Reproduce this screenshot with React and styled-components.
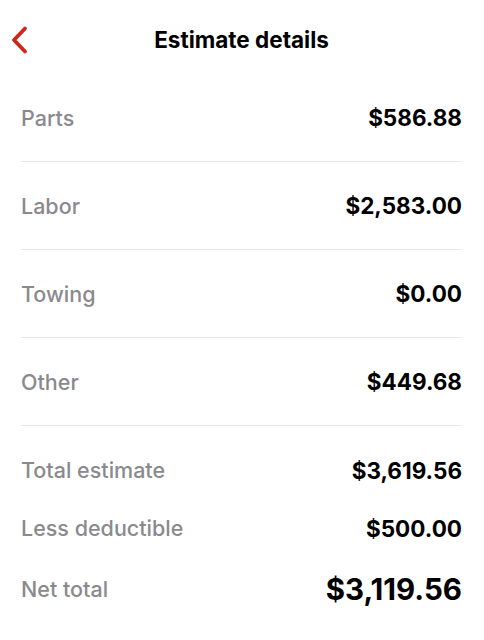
import React from 'react';
import styled, { createGlobalStyle } from 'styled-components';

const GlobalStyle = createGlobalStyle`
  html, body {
    margin: 0;
    padding: 0;
    background: #ffffff;
  }
  body {
    font-family: Inter, "Noto Sans", Arial, sans-serif;
    -webkit-font-smoothing: antialiased;
  }
`;

const lineItems = [
  { label: 'Parts', amount: '$586.88' },
  { label: 'Labor', amount: '$2,583.00' },
  { label: 'Towing', amount: '$0.00' },
  { label: 'Other', amount: '$449.68' },
];

const summary = [
  { label: 'Total estimate', amount: '$3,619.56' },
  { label: 'Less deductible', amount: '$500.00' },
  { label: 'Net total', amount: '$3,119.56', big: true },
];

const App = () => {
  return (
    <>
      <GlobalStyle />
      <Screen>
        <Header>
          <BackButton aria-label="Back">
            <svg width="20" height="30" viewBox="0 0 20 30">
              <polyline
                points="15,3.5 4,15 15,26.5"
                fill="none"
                stroke="#cf261c"
                strokeWidth="3.8"
                strokeLinecap="round"
                strokeLinejoin="round"
              />
            </svg>
          </BackButton>
          <Title>Estimate details</Title>
        </Header>

        <List>
          {lineItems.map((item) => (
            <ItemRow key={item.label}>
              <Label>{item.label}</Label>
              <Amount>{item.amount}</Amount>
            </ItemRow>
          ))}
        </List>

        <Summary>
          {summary.map((item) => (
            <SummaryRow key={item.label} big={item.big}>
              <Label>{item.label}</Label>
              <Amount big={item.big}>{item.amount}</Amount>
            </SummaryRow>
          ))}
        </Summary>
      </Screen>
    </>
  );
};

export default App;

const Screen = styled.div`
  width: 484px;
  min-height: 640px;
  padding: 0 22px 0 21px;
  box-sizing: border-box;
  background: #ffffff;
`;

const Header = styled.div`
  position: relative;
  display: flex;
  justify-content: center;
  align-items: center;
  padding: 27px 0 21px;
  height: 26px;
`;

const BackButton = styled.button`
  position: absolute;
  left: -11px;
  top: 25px;
  display: flex;
  padding: 0;
  border: 0;
  background: none;
  cursor: pointer;
`;

const Title = styled.h1`
  margin: 0;
  font-size: 22.5px;
  line-height: 26px;
  font-weight: 700;
  color: #000000;
`;

const List = styled.div`
  display: flex;
  flex-direction: column;
`;

const ItemRow = styled.div`
  display: flex;
  justify-content: space-between;
  align-items: center;
  height: 88px;
  box-sizing: border-box;
  border-bottom: 1px solid #e8e8ea;
`;

const Summary = styled.div`
  display: flex;
  flex-direction: column;
  gap: 28px;
  padding-top: 29px;
`;

const SummaryRow = styled.div`
  display: flex;
  justify-content: space-between;
  align-items: center;
  height: ${(props) => (props.big ? '36px' : '30px')};
`;

const Label = styled.span`
  font-size: 21.5px;
  font-weight: 500;
  color: #8a8a8e;
`;

const Amount = styled.span`
  font-size: ${(props) => (props.big ? '29.5px' : '22.5px')};
  font-weight: 700;
  color: #000000;
`;
